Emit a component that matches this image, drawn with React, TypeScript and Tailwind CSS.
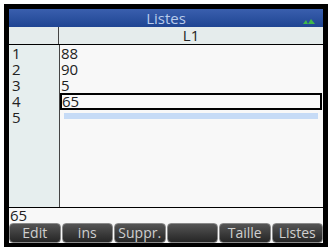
import React from 'react'

const rows = ['88', '90', '5', '65', '']
const keys = ['Edit', 'ins', 'Suppr.', '', 'Taille', 'Listes']

export default function App() {
  return (
    <div className="w-[329px] h-[248px] bg-white pt-[4px] pl-[4px]" style={{ fontFamily: '"Open Sans", "DejaVu Sans", sans-serif' }}>
      <div className="w-[324px] h-[243px] bg-black pt-[5px] pl-[5px] pr-[5px] pb-[4px]">
        <div className="w-[314px] h-[234px] flex flex-col bg-[#f8f8f8]">
          {/* title bar */}
          <div className="h-[18px] relative flex items-center justify-center bg-gradient-to-b from-[#3a5fae] to-[#1f4593]">
            <span className="text-[15px] leading-none text-[#b9cbeb]">Listes</span>
            <svg className="absolute right-[8px] bottom-[3px]" width="12" height="5" viewBox="0 0 12 5">
              <path d="M0 5 L3 1 L5 5 Z M5 5 L8 0 L12 5 Z" fill="#3fb84a" />
            </svg>
          </div>
          {/* header */}
          <div className="h-[18px] flex bg-[#e5ecec] border-b border-black">
            <div className="w-[50px] border-r border-[#444]" />
            <div className="flex-1 flex items-center justify-center text-[15px] leading-none text-[#222]">L1</div>
          </div>
          {/* rows */}
          <div className="flex-1 flex">
            <div className="w-[51px] bg-[#e6eeee] border-r border-[#444]">
              {rows.map((_, i) => (
                <div key={i} className="h-[16px] pl-[3px] text-[15px] leading-[16px] text-[#222]">{i + 1}</div>
              ))}
            </div>
            <div className="flex-1 pr-[1px]">
              {rows.map((v, i) =>
                i === 3 ? (
                  <div key={i} className="h-[17px] border-2 border-black pl-[0px] text-[15px] leading-[13px] text-[#222]">{v}</div>
                ) : i === 4 ? (
                  <div key={i} className="h-[15px] pt-[3px] pl-[4px] pr-[4px]">
                    <div className="h-[6px] bg-[#c6dbf6]" />
                  </div>
                ) : (
                  <div key={i} className="h-[16px] pl-[1px] text-[15px] leading-[16px] text-[#222]">{v}</div>
                )
              )}
            </div>
          </div>
          {/* edit line */}
          <div className="h-[16px] border-t border-black bg-[#f8f8f8] pl-[1px] text-[15px] leading-[15px] text-[#222]">65</div>
          {/* soft keys */}
          <div className="h-[20px] flex gap-[1px] bg-[#f8f8f8]">
            {keys.map((k, i) => (
              <div key={i} className="flex-1 rounded-[4px] border border-[#8a8a8a] bg-gradient-to-b from-[#555] to-[#262626] flex items-center justify-center text-[14px] leading-none text-[#cfcfcf]">
                {k}
              </div>
            ))}
          </div>
        </div>
      </div>
    </div>
  )
}
